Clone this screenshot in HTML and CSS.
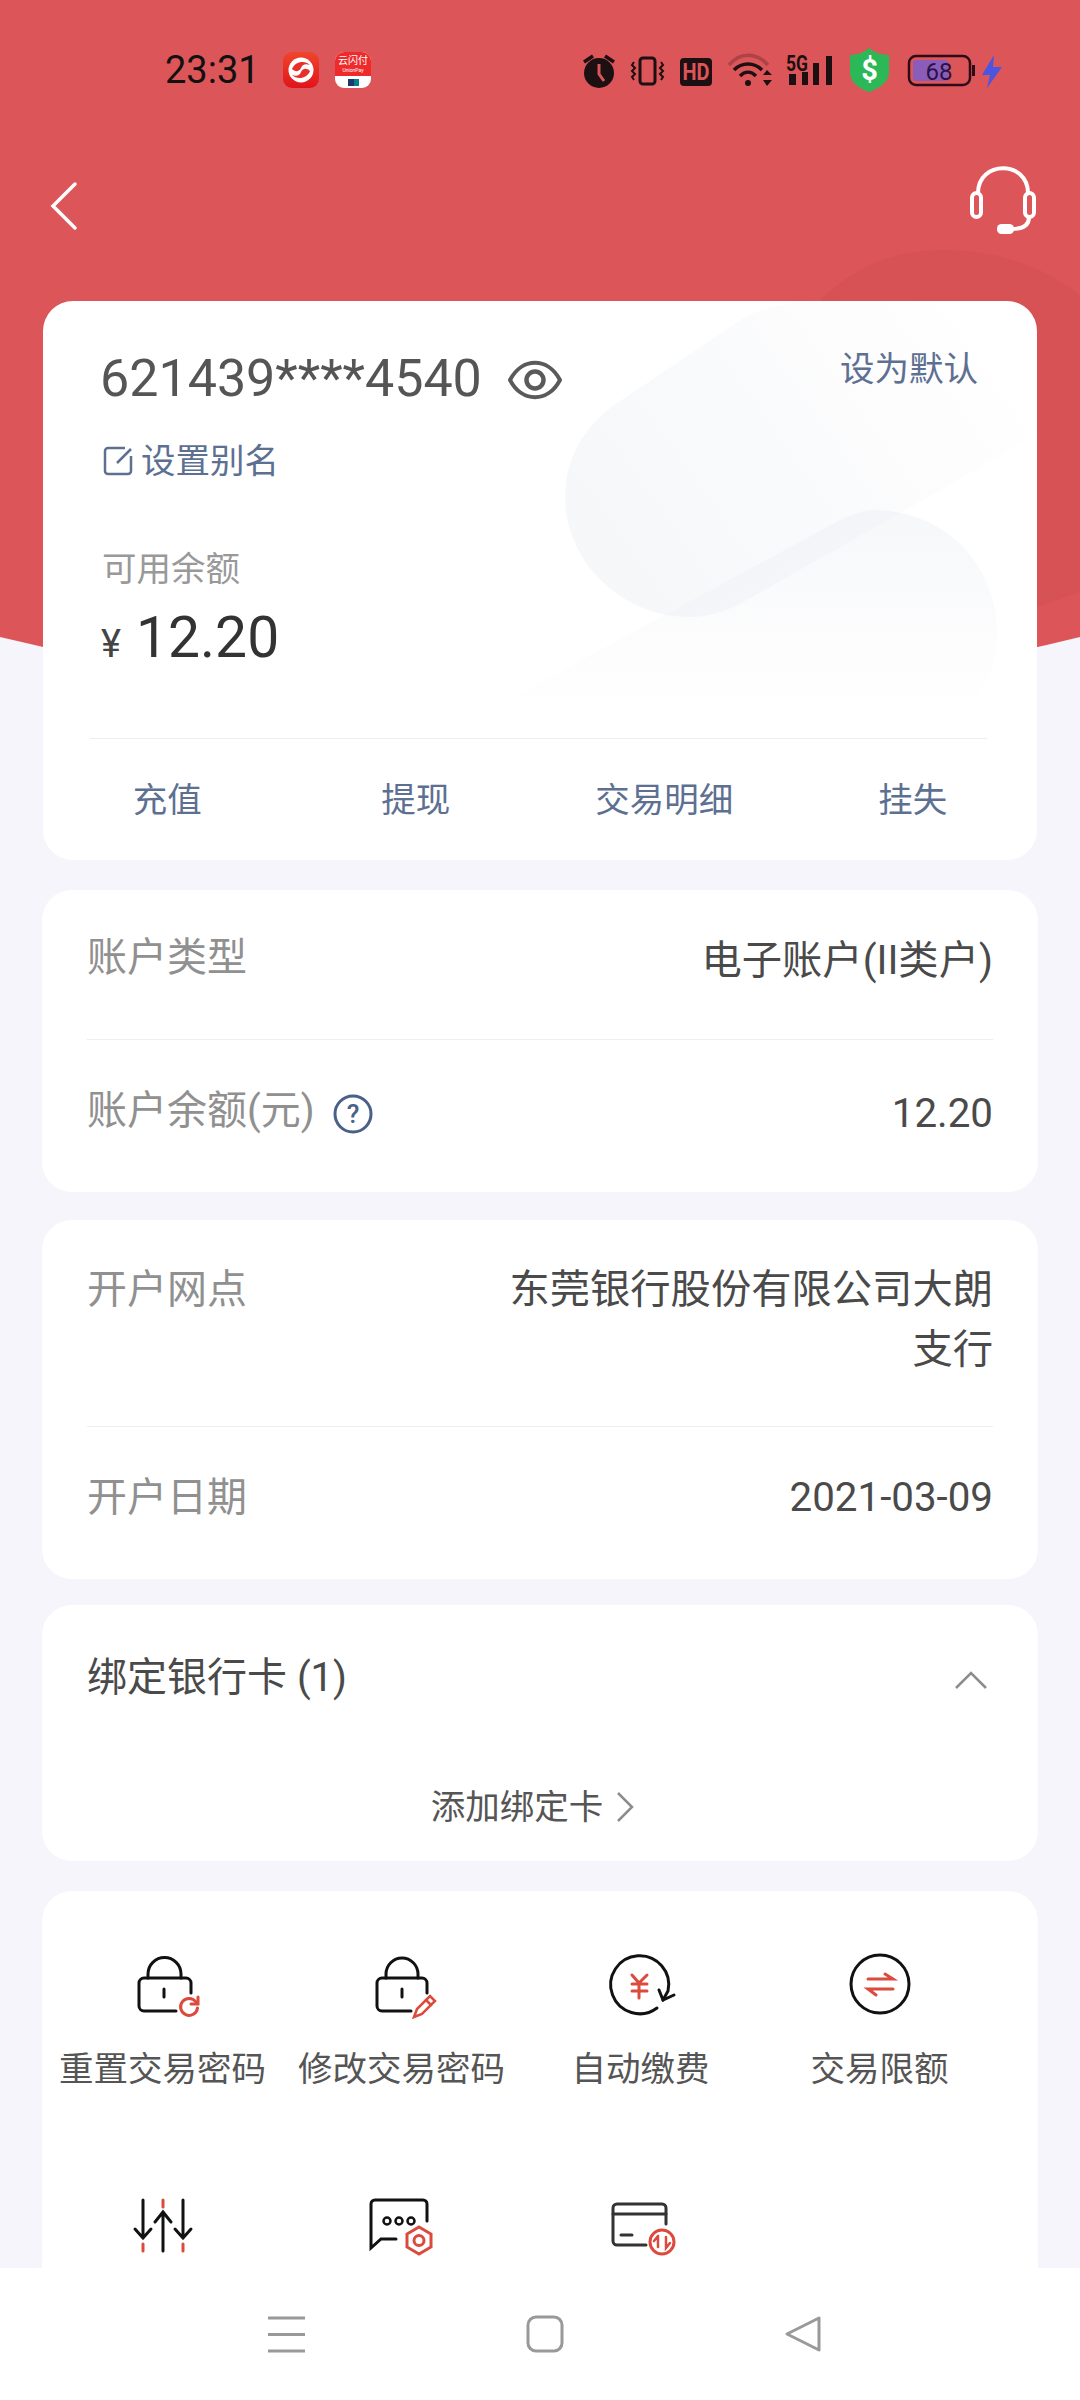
FILE: index.html
```html
<!DOCTYPE html>
<html lang="zh-CN">
<head>
    <meta charset="UTF-8">
    <meta name="viewport" content="width=device-width, initial-scale=1.0">
    <title>账户详情</title>
    <link rel="stylesheet" href="styles.css">
</head>
<body>
    <div class="screen">
        <svg class="header-bg" viewBox="0 0 1080 720" width="1080" height="720">
            <path d="M0 0H1080V637Q540 770 0 637Z" fill="#dc5558"/>
            <path d="M820 300C860 262 900 250 945 250C1000 250 1050 270 1080 296V592Q1058 600 1037 607H820Z" fill="#d75254"/>
        </svg>

        <main class="content">
            <div class="status-bar">
                <span class="clock">23:31</span>
                <div class="app-icon app-red">
                    <svg viewBox="0 0 36 36" width="36" height="36">
                        <circle cx="18" cy="18" r="12.500" fill="#fff"/>
                        <path d="M9 17C12 9 22 8 27 13C22 11 19 13 18 16C16 20 12 20 9 17Z" fill="#e8302a"/>
                        <path d="M27 19C24 27 14 28 9 23C14 25 17 23 18 20C20 16 24 16 27 19Z" fill="#e8302a"/>
                    </svg>
                </div>
                <div class="app-icon app-pay">
                    <div class="pay-top">
                        <span class="pay-name">云闪付</span>
                        <span class="pay-sub">UnionPay</span>
                    </div>
                    <div class="pay-bottom"><i class="pay-flag"></i></div>
                </div>
                <svg class="status-icons" viewBox="575 40 435 60" width="435" height="60">
                    <!-- 闹钟 -->
                    <circle cx="599" cy="73" r="15" fill="#1d1012"/>
                    <path d="M599 64V74L604 81" fill="none" stroke="#dc5558" stroke-width="3"/>
                    <path d="M584 62L593 56M614 62L605 56" stroke="#1d1012" stroke-width="3.500" fill="none"/>
                    <!-- 振动 -->
                    <rect x="640" y="58" width="15" height="26" rx="3" fill="none" stroke="#1d1012" stroke-width="3"/>
                    <path d="M634 62L632 65L635 68L632 71L635 74L632 77L634 80M661 62L663 65L660 68L663 71L660 74L663 77L661 80" fill="none" stroke="#1d1012" stroke-width="2"/>
                    <!-- HD -->
                    <rect x="680" y="58" width="32" height="28" rx="4" fill="#1d1012"/>
                    <text class="status-hd" x="696" y="80" text-anchor="middle" textLength="27" lengthAdjust="spacingAndGlyphs">HD</text>
                    <!-- wifi -->
                    <path d="M729 65C740 52 756 52 768 65" fill="none" stroke="#1d1012" stroke-opacity="0.25" stroke-width="3.500"/>
                    <path d="M734 70C742 62 754 62 762 70" fill="none" stroke="#1d1012" stroke-width="3.500"/>
                    <path d="M740 76C745 71 751 71 756 76" fill="none" stroke="#1d1012" stroke-width="3.500"/>
                    <circle cx="748" cy="83" r="3" fill="#1d1012"/>
                    <path d="M763 75L767 70L772 75ZM763 80H772L767 86Z" fill="#1d1012"/>
                    <!-- 5G 信号 -->
                    <text class="status-5g" x="786" y="71" textLength="22" lengthAdjust="spacingAndGlyphs">5G</text>
                    <path d="M789 74h7v11h-7zM802 72h6v13h-6zM813 63h6v22h-6zM826 56h6v29h-6z" fill="#1d1012"/>
                    <!-- 盾牌 -->
                    <path d="M869 48C875 53 882 55 889 55V72C889 82 880 88 869 92C858 88 850 82 850 72V55C857 55 863 53 869 48Z" fill="#2db858"/>
                    <text class="status-dollar" x="869.500" y="80" text-anchor="middle">$</text>
                    <!-- 电池 -->
                    <rect x="909" y="56" width="61" height="29" rx="7" fill="none" stroke="#2c0d17" stroke-width="2.500"/>
                    <rect x="913" y="60" width="35" height="21" rx="3" fill="#8b5dba"/>
                    <rect x="972" y="65" width="3" height="11" fill="#2c0d17"/>
                    <text class="status-batt" x="939" y="80" text-anchor="middle">68</text>
                    <path d="M994 55L982 75H990L987 88L1002 67H993Z" fill="#4a55e0"/>
                </svg>
            </div>

            <div class="nav-bar">
                <svg class="nav-back" viewBox="0 0 30 50" width="30" height="50">
                    <path d="M27 3L5 25L27 47" fill="none" stroke="#fff" stroke-width="3.500" stroke-linecap="round"/>
                </svg>
                <svg class="nav-service" viewBox="0 0 70 72" width="70" height="72">
                    <path d="M10 29C10 -4 60 -4 60 29" fill="none" stroke="#fff" stroke-width="4"/>
                    <rect x="4" y="29" width="9" height="24" rx="4.500" fill="none" stroke="#fff" stroke-width="4"/>
                    <rect x="57" y="29" width="9" height="24" rx="4.500" fill="none" stroke="#fff" stroke-width="4"/>
                    <path d="M61 53C61 63 52 65 44 65" fill="none" stroke="#fff" stroke-width="4"/>
                    <rect x="29" y="60" width="17" height="10" rx="4.500" fill="#fff"/>
                </svg>
            </div>

            <section class="card card-main">
                <svg class="card-deco" viewBox="43 301 994 559" width="994" height="559">
                    <defs>
                        <linearGradient id="blobA" gradientUnits="userSpaceOnUse" x1="620" y1="560" x2="960" y2="320">
                            <stop offset="0" stop-color="#e4e7ee" stop-opacity="0.32"/>
                            <stop offset="0.5" stop-color="#e4e7ee" stop-opacity="0.18"/>
                            <stop offset="1" stop-color="#e4e7ee" stop-opacity="0.02"/>
                        </linearGradient>
                        <linearGradient id="blobB" gradientUnits="userSpaceOnUse" x1="800" y1="510" x2="800" y2="715">
                            <stop offset="0" stop-color="#e4e7ee" stop-opacity="0.32"/>
                            <stop offset="0.5" stop-color="#e4e7ee" stop-opacity="0.15"/>
                            <stop offset="1" stop-color="#e4e7ee" stop-opacity="0"/>
                        </linearGradient>
                    </defs>
                    <path d="M565 497C565 455 588 420 625 398L740 320C760 306 800 301 830 301H1037V430L1023 443L747 600C725 612 708 617 690 617C620 617 565 560 565 497Z" fill="url(#blobA)"/>
                    <path d="M480 715L840 520C855 513 865 510 873 510C945 510 997 565 997 633C997 665 985 690 965 715Z" fill="url(#blobB)"/>
                </svg>
                <div class="main-top">
                    <div class="number-row">
                        <div class="number-left">
                            <span class="card-number">621439****4540</span>
                            <svg class="eye" viewBox="0 0 54 42" width="54" height="42">
                                <path d="M2 21C14 -2 40 -2 52 21C40 44 14 44 2 21Z" fill="none" stroke="#5a5a5a" stroke-width="4" stroke-linejoin="round"/>
                                <circle cx="27" cy="21" r="8.500" fill="none" stroke="#5a5a5a" stroke-width="4.500"/>
                            </svg>
                        </div>
                        <span class="link default-link">设为默认</span>
                    </div>
                    <div class="alias">
                        <svg viewBox="0 0 30 30" width="30" height="30">
                            <path d="M22 2H5a3 3 0 0 0-3 3V25a3 3 0 0 0 3 3H25a3 3 0 0 0 3-3V10M28 3L14 17" fill="none" stroke="#5d7092" stroke-width="2.500"/>
                        </svg>
                        <span class="link">设置别名</span>
                    </div>
                    <div class="balance-label">可用余额</div>
                    <div class="balance"><span class="yen">¥</span><span class="amount">12.20</span></div>
                </div>
                <div class="main-divider"></div>
                <div class="actions">
                    <span class="link">充值</span>
                    <span class="link">提现</span>
                    <span class="link">交易明细</span>
                    <span class="link">挂失</span>
                </div>
            </section>

            <section class="card">
                <div class="row">
                    <span class="row-label">账户类型</span>
                    <span class="row-value value-low">电子账户(II类户)</span>
                </div>
                <div class="row row-next">
                    <span class="row-label label-help">账户余额(元)
                        <svg viewBox="0 0 40 40" width="40" height="40">
                            <circle cx="20" cy="20" r="18" fill="none" stroke="#4a6088" stroke-width="3"/>
                            <text class="help-mark" x="20" y="29" text-anchor="middle">?</text>
                        </svg>
                    </span>
                    <span class="row-value value-low">12.20</span>
                </div>
            </section>

            <section class="card card-branch">
                <div class="row row-tall">
                    <span class="row-label">开户网点</span>
                    <span class="row-value value-wrap">东莞银行股份有限公司大朗支行</span>
                </div>
                <div class="row row-next">
                    <span class="row-label">开户日期</span>
                    <span class="row-value">2021-03-09</span>
                </div>
            </section>

            <section class="card card-bind">
                <div class="bind-head">
                    <span class="bind-title">绑定银行卡 (1)</span>
                    <svg viewBox="0 0 32 18" width="32" height="18">
                        <path d="M1 17L16 2L31 17" fill="none" stroke="#8c8c8c" stroke-width="2.500"/>
                    </svg>
                </div>
                <div class="bind-add">
                    <span>添加绑定卡</span>
                    <svg viewBox="0 0 18 30" width="18" height="30">
                        <path d="M2 1L16 15L2 29" fill="none" stroke="#8c8c8c" stroke-width="2.500"/>
                    </svg>
                </div>
            </section>

            <section class="card card-grid">
                <div class="grid-item">
                    <svg class="grid-icon" viewBox="0 0 80 80" width="80" height="80">
                        <g class="ic-black">
                            <path d="M68 42V32a5 5 0 0 0-5-5H21a5 5 0 0 0-5 5V55a5 5 0 0 0 5 5H53"/>
                            <path d="M25 27V23a16.500 16.500 0 0 1 33 0V27"/>
                            <path d="M41 38V46"/>
                        </g>
                        <g class="ic-red">
                            <path d="M73 51A8.500 8.500 0 1 0 74.500 57"/>
                            <path d="M75 46V53H68"/>
                        </g>
                    </svg>
                    <span class="grid-label">重置交易密码</span>
                </div>
                <div class="grid-item">
                    <svg class="grid-icon" viewBox="0 0 80 80" width="80" height="80">
                        <g class="ic-black">
                            <path d="M65 42V32a5 5 0 0 0-5-5H20a5 5 0 0 0-5 5V55a5 5 0 0 0 5 5H49"/>
                            <path d="M24 27V23a16 16 0 0 1 32 0V27"/>
                            <path d="M40 38V46"/>
                        </g>
                        <g class="ic-red ic-thin">
                            <path d="M52 66L55 58L68 45L73 50L60 63Z"/>
                            <path d="M64 49L69 54"/>
                        </g>
                    </svg>
                    <span class="grid-label">修改交易密码</span>
                </div>
                <div class="grid-item">
                    <svg class="grid-icon" viewBox="0 0 80 80" width="80" height="80">
                        <g class="ic-black">
                            <path d="M56 57A29 29 0 1 1 67 40L62 49"/>
                            <path d="M58 39L62 49L73 44"/>
                        </g>
                        <g class="ic-red">
                            <path d="M31 24L38 32L46 24M38 32V47M31 33H46M31 40H46"/>
                        </g>
                    </svg>
                    <span class="grid-label">自动缴费</span>
                </div>
                <div class="grid-item">
                    <svg class="grid-icon" viewBox="0 0 80 80" width="80" height="80">
                        <circle class="ic-black" cx="40" cy="33" r="29"/>
                        <g class="ic-red">
                            <path d="M28 28H53L45 23"/>
                            <path d="M53 38H28L36 44"/>
                        </g>
                    </svg>
                    <span class="grid-label">交易限额</span>
                </div>
                <div class="grid-item">
                    <svg class="grid-icon" viewBox="0 0 80 80" width="80" height="80">
                        <g class="ic-black">
                            <path d="M20 9V47M12 38L20 47L28 38"/>
                            <path d="M60 9V47M52 38L60 47L68 38"/>
                            <path d="M40 60V21M32 31L40 21L48 31"/>
                        </g>
                        <g class="ic-red">
                            <path d="M40 9V16M20 53V60M60 53V60"/>
                        </g>
                    </svg>
                </div>
                <div class="grid-item">
                    <svg class="grid-icon" viewBox="0 0 80 80" width="80" height="80">
                        <g class="ic-black">
                            <path d="M65 30V13a4 4 0 0 0-4-4H13a4 4 0 0 0-4 4V57L19 48H34"/>
                            <circle class="ic-dot" cx="25" cy="30" r="3.500"/>
                            <circle class="ic-dot" cx="37" cy="30" r="3.500"/>
                            <circle class="ic-dot" cx="49" cy="30" r="3.500"/>
                        </g>
                        <g class="ic-red">
                            <path d="M57 36L69 43V56L57 63L45 56V43Z"/>
                            <circle cx="57" cy="49.500" r="5"/>
                        </g>
                    </svg>
                </div>
                <div class="grid-item">
                    <svg class="grid-icon" viewBox="0 0 80 80" width="80" height="80">
                        <g class="ic-dark">
                            <path d="M65 33V17a4 4 0 0 0-4-4H16a4 4 0 0 0-4 4V50a4 4 0 0 0 4 4H45"/>
                            <path d="M12 23H65"/>
                            <path d="M20 44H31"/>
                        </g>
                        <g class="ic-red">
                            <circle cx="61" cy="51" r="12"/>
                            <path class="ic-thin" d="M57 45V56M53 50L57 45M65 46V57L69 52"/>
                        </g>
                    </svg>
                </div>
            </section>
        </main>

        <nav class="sys-nav">
            <svg viewBox="0 0 40 40" width="40" height="40">
                <path d="M1 4H38M1 20.500H38M1 37H38" stroke="#999" stroke-width="3" fill="none"/>
            </svg>
            <svg viewBox="0 0 40 40" width="40" height="40">
                <rect x="3" y="3" width="34" height="34" rx="8" fill="none" stroke="#999" stroke-width="3"/>
            </svg>
            <svg viewBox="0 0 40 40" width="40" height="40">
                <path d="M36 4V36L4 20Z" fill="none" stroke="#999" stroke-width="3" stroke-linejoin="round"/>
            </svg>
        </nav>
    </div>
</body>
</html>
```

FILE: styles.css
```css
* {
    box-sizing: border-box;
}
html, body {
    margin: 0;
    padding: 0;
}
body {
    width: 1080px;
    height: 2400px;
    overflow: hidden;
    background: #f5f5fb;
    font-family: "Roboto", "Noto Sans CJK SC", sans-serif;
}
.screen {
    position: relative;
    width: 1080px;
    height: 2400px;
    display: flex;
    flex-direction: column;
}
.header-bg {
    position: absolute;
    left: 0;
    top: 0;
}
.content {
    position: relative;
    height: 2268px;
    overflow: hidden;
}

/* status bar */
.status-bar {
    height: 140px;
    padding-left: 165px;
    display: flex;
    align-items: center;
}
.clock {
    width: 118px;
    font-size: 38px;
    color: #111;
}
.app-icon {
    width: 36px;
    height: 36px;
    border-radius: 9px;
    overflow: hidden;
    flex: none;
}
.app-red {
    background: linear-gradient(#f0452c, #e0141c);
    margin-right: 16px;
}
.app-pay {
    background: #fff;
    display: flex;
    flex-direction: column;
}
.pay-top {
    height: 24px;
    background: #ee2a2a;
    color: #fff;
    text-align: center;
    display: flex;
    flex-direction: column;
    align-items: center;
}
.pay-name {
    font-size: 10px;
    line-height: 13px;
    margin-top: 2px;
}
.pay-sub {
    font-size: 5px;
    line-height: 6px;
}
.pay-bottom {
    flex: 1;
    display: flex;
    align-items: center;
    justify-content: center;
}
.pay-flag {
    display: block;
    width: 11px;
    height: 7px;
    background: linear-gradient(90deg, #1a3a6b 50%, #0a7c8c 50%);
}
.status-icons {
    margin-left: 204px;
    flex: none;
}
.status-hd {
    font: bold 23px "Roboto", sans-serif;
    fill: #dc5558;
}
.status-5g {
    font: bold 22px "Roboto", sans-serif;
    fill: #1d1012;
}
.status-dollar {
    font: bold 29px "Roboto", sans-serif;
    fill: #fff;
}
.status-batt {
    font: 24px "Roboto", sans-serif;
    fill: #2a1248;
}

/* top nav */
.nav-bar {
    height: 161px;
    padding: 24px 42px 0 48px;
    display: flex;
    justify-content: space-between;
    align-items: flex-start;
}
.nav-back {
    margin-top: 17px;
}

/* cards */
.card {
    position: relative;
    margin: 0 42px 28px;
    padding: 0 45px;
    background: #fff;
    border-radius: 30px;
}
.card-main {
    margin: 0 43px 30px;
    padding: 0;
    height: 559px;
    overflow: hidden;
}
.card-deco {
    position: absolute;
    left: 0;
    top: 0;
}
.main-top {
    position: relative;
    padding: 48px 59px 0;
}
.number-row {
    display: flex;
    justify-content: space-between;
    align-items: flex-start;
}
.number-left {
    display: flex;
    align-items: center;
}
.card-number {
    margin-left: -2px;
    font-size: 52px;
    line-height: 60px;
    color: #555;
}
.eye {
    margin: 2px 0 0 26px;
}
.link {
    font-size: 34.500px;
    line-height: 40px;
    color: #5d7092;
}
.alias {
    display: flex;
    align-items: center;
    gap: 8px;
    margin-top: 32px;
}
.alias svg {
    margin-left: 1px;
}
.balance-label {
    margin-top: 68px;
    font-size: 34.500px;
    line-height: 40px;
    color: #999;
}
.balance {
    margin: 19px 0 -2px -1px;
    display: flex;
    align-items: baseline;
    height: 60px;
    line-height: 60px;
}
.yen {
    font-size: 38px;
    color: #444;
    width: 35px;
}
.amount {
    font-size: 57px;
    color: #333;
}
.main-divider {
    position: relative;
    margin: 72px 50px 0 47px;
    height: 1px;
    background: #eeeef2;
}
.actions {
    position: relative;
    display: grid;
    grid-template-columns: repeat(4, 1fr);
    padding-top: 41px;
    text-align: center;
}

/* rows */
.row {
    display: flex;
    justify-content: space-between;
    align-items: flex-start;
    padding: 38px 0 51px;
}
.row-next {
    border-top: 1px solid #eeeef2;
    padding: 41px 0 51px;
}
.row-tall {
    padding: 40px 0 46px;
}
.row-label {
    font-size: 40px;
    line-height: 60px;
    color: #909090;
}
.label-help {
    display: flex;
    align-items: center;
    gap: 18px;
}
.label-help svg {
    margin-top: 6px;
}
.help-mark {
    font: 500 26px "Roboto", sans-serif;
    fill: #4a6088;
}
.row-value {
    font-size: 40.300px;
    line-height: 60px;
    color: #4a4a4a;
    text-align: right;
}
.value-low {
    margin-top: 3px;
    margin-bottom: -3px;
}
.value-wrap {
    width: 486px;
}
.card-branch {
    margin-bottom: 26px;
}

/* bound card */
.card-bind {
    height: 256px;
    margin-bottom: 30px;
}
.bind-head {
    display: flex;
    justify-content: space-between;
    align-items: center;
    padding-top: 43px;
    height: 103px;
}
.bind-title {
    font-size: 40px;
    line-height: 60px;
    color: #4a4a4a;
}
.bind-head svg {
    margin: 4px 6px 0 0;
}
.bind-add {
    margin-top: 79px;
    padding-right: 15px;
    display: flex;
    justify-content: center;
    align-items: center;
    gap: 13px;
    font-size: 34.500px;
    line-height: 40px;
    color: #555;
}

/* menu grid */
.card-grid {
    padding: 60px 38px 60px 1px;
    height: 600px;
    display: grid;
    grid-template-columns: repeat(4, 239px);
    grid-auto-rows: 240px;
}
.grid-item {
    display: flex;
    flex-direction: column;
    align-items: center;
}
.grid-label {
    margin-top: 16px;
    font-size: 34.500px;
    line-height: 44px;
    color: #555;
    white-space: nowrap;
}
.ic-black, .ic-red, .ic-dark {
    fill: none;
    stroke-width: 3;
    stroke-linecap: round;
}
.ic-black {
    stroke: #111;
}
.ic-dark {
    stroke: #333;
}
.ic-red {
    stroke: #db4a3c;
}
.ic-thin {
    stroke-width: 2.500;
}
.ic-dot {
    stroke-width: 2.500;
}

/* system nav */
.sys-nav {
    height: 132px;
    background: #fff;
    position: relative;
    padding: 0 257px 0 267px;
    display: flex;
    justify-content: space-between;
    align-items: center;
}
```
